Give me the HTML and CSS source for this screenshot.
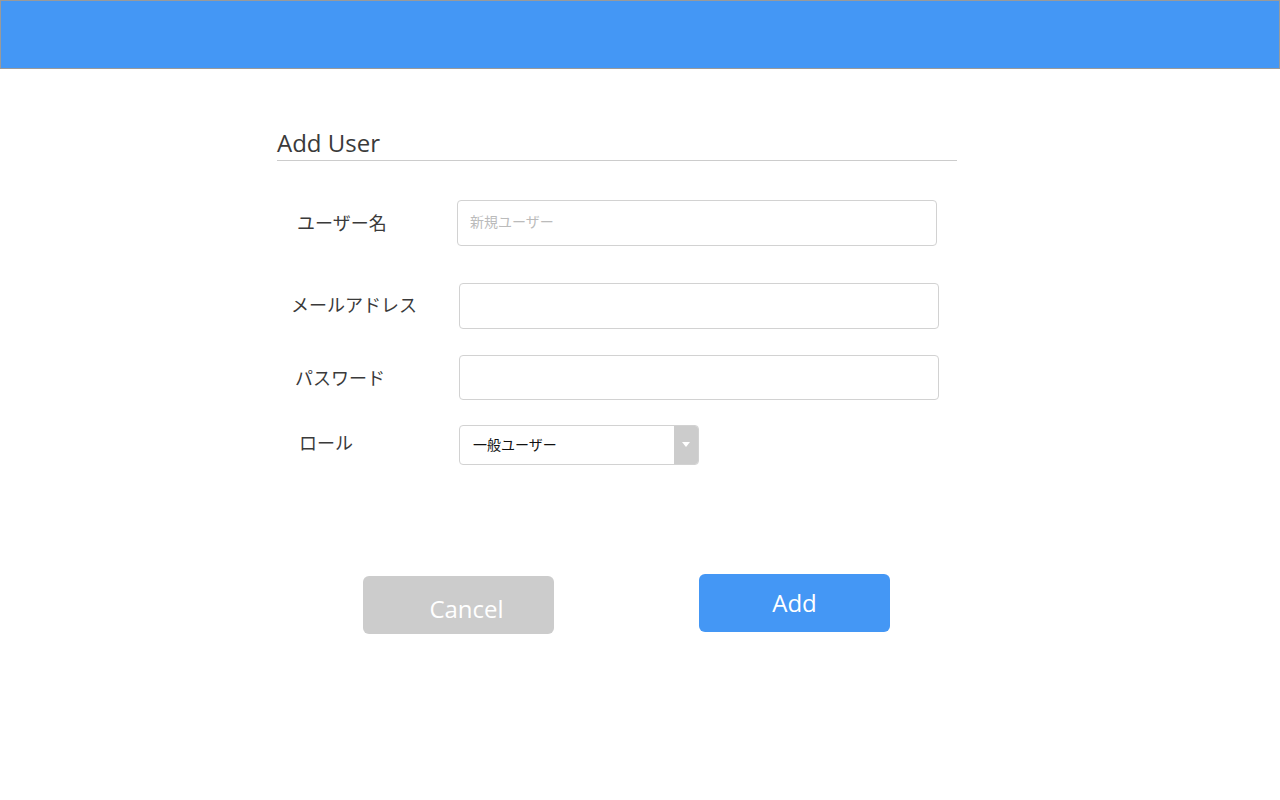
FILE: index.html
```html
<!DOCTYPE html>
<html lang="ja">
<head>
<meta charset="utf-8">
<title>Add User</title>
<link rel="stylesheet" href="styles.css">
</head>
<body>
<header class="topbar"></header>
<main class="page">
  <section class="form-card">
    <h1 class="title">Add User</h1>
    <div class="row row-name">
      <label class="label">ユーザー名</label>
      <div class="field"><span class="placeholder">新規ユーザー</span></div>
    </div>
    <div class="row row-mail">
      <label class="label">メールアドレス</label>
      <div class="field"></div>
    </div>
    <div class="row row-pass">
      <label class="label">パスワード</label>
      <div class="field"></div>
    </div>
    <div class="row row-role">
      <label class="label">ロール</label>
      <div class="select">
        <span class="select-text">一般ユーザー</span>
        <span class="select-arrow"><svg width="8" height="6" viewBox="0 0 8 6"><path d="M0 0 L8 0 L4 5 Z" fill="#ffffff"/></svg></span>
      </div>
    </div>
    <div class="actions">
      <button class="btn btn-cancel">Cancel</button>
      <button class="btn btn-add">Add</button>
    </div>
  </section>
</main>
</body>
</html>
```
FILE: styles.css
```css
* { box-sizing: border-box; }
html, body { margin: 0; padding: 0; background: #ffffff; }
body {
  font-family: "Open Sans", "Noto Sans CJK JP", sans-serif;
  color: #333333;
  width: 1280px;
  height: 800px;
  overflow: hidden;
}
.topbar {
  height: 69px;
  background: #4497f5;
  border: 1px solid #9a9a9a;
}
.page {
  padding-left: 277px;
}
.form-card {
  width: 680px;
}
.title {
  margin: 0;
  padding-top: 58px;
  font-family: "Open Sans", sans-serif;
  font-weight: 400;
  font-size: 24px;
  line-height: 32px;
  color: #3a3a3a;
  height: 92px;
  border-bottom: 1px solid #cccccc;
}
.row {
  display: flex;
  align-items: center;
}
.label {
  width: 180px;
  font-family: "Noto Sans CJK JP", sans-serif;
  font-size: 18px;
  color: #3a3a3a;
}
.field {
  width: 480px;
  height: 46px;
  border: 1px solid #d2d2d2;
  border-radius: 4px;
  display: flex;
  align-items: center;
  padding-left: 12px;
  padding-bottom: 4px;
}
.placeholder {
  font-family: "Noto Sans CJK JP", sans-serif;
  font-size: 14px;
  color: #bbbbbb;
}
.row-name { margin-top: 39px; }
.row-name .label { padding-left: 20px; padding-bottom: 2px; }
.row-mail { margin-top: 37px; }
.row-mail .label { padding-left: 14px; width: 182px; padding-bottom: 4px; }
.row-mail .field { height: 46px; }
.row-pass { margin-top: 26px; }
.row-pass .label { padding-left: 18px; width: 182px; padding-bottom: 2px; }
.row-pass .field { height: 45px; }
.row-role { margin-top: 25px; }
.row-role .label { padding-left: 22px; width: 182px; padding-bottom: 6px; }
.select {
  width: 240px;
  height: 40px;
  border: 1px solid #d2d2d2;
  border-radius: 4px;
  display: flex;
  align-items: center;
  overflow: hidden;
}
.select-text {
  flex: 1;
  padding-left: 13px;
  padding-bottom: 3px;
  font-family: "Noto Sans CJK JP", sans-serif;
  font-size: 14px;
  color: #111111;
}
.select-arrow {
  width: 24px;
  height: 100%;
  background: #cccccc;
  display: flex;
  align-items: center;
  justify-content: center;
}
.actions {
  display: flex;
  align-items: flex-start;
  margin-top: 109px;
  padding-left: 86px;
  gap: 145px;
}
.btn {
  width: 191px;
  height: 58px;
  border: none;
  border-radius: 6px;
  font-family: "Open Sans", sans-serif;
  font-size: 24px;
  color: #ffffff;
  padding: 0;
}
.btn-cancel {
  background: #cccccc;
  margin-top: 2px;
  padding-top: 6px;
  padding-left: 16px;
}
.btn-add {
  background: #4497f5;
  padding-bottom: 2px;
}
```
